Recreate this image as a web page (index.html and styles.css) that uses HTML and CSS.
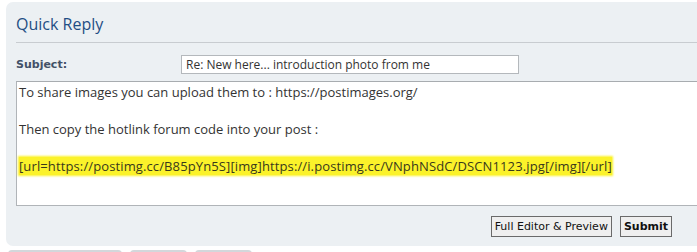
FILE: index.html
```html
<!DOCTYPE html>
<html lang="en">
<head>
    <meta charset="UTF-8">
    <meta name="viewport" content="width=device-width, initial-scale=1.0">
    <title>Quick Reply</title>
    <link rel="stylesheet" href="styles.css">
</head>
<body>
    <div class="panel">
        <h2 class="panel-title">Quick Reply</h2>
        <div class="subject-row">
            <label class="subject-label" for="subject">Subject:</label>
            <input class="subject-input" id="subject" type="text" value="Re: New here... introduction photo from me">
        </div>
        <div class="message-box">
            <div class="message-line">To share images you can upload them to : https://postimages.org/</div>
            <div class="message-line">&nbsp;</div>
            <div class="message-line">Then copy the hotlink forum code into your post :</div>
            <div class="message-line">&nbsp;</div>
            <div class="message-line"><span class="marker">[url=https://postimg.cc/B85pYn5S][img]https://i.postimg.cc/VNphNSdC/DSCN1123.jpg[/img][/url]</span></div>
        </div>
        <div class="button-row">
            <button class="form-button">Full Editor &amp; Preview</button>
            <button class="form-button primary">Submit</button>
        </div>
    </div>
    <div class="tab-row">
        <div class="tab tab-wide"></div>
        <div class="tab"></div>
        <div class="tab"></div>
    </div>
</body>
</html>
```

FILE: styles.css
```css
body {
    margin: 0;
    background-color: #ffffff;
    overflow: hidden;
    font-family: "Open Sans", sans-serif;
}
/* panel runs on past the right side of the window */
.panel {
    margin: 2px 0 0 6px;
    height: 244px;
    box-sizing: border-box;
    padding: 0 0 0 10px;
    background-color: #ecf0f3;
    border-radius: 7px 0 0 7px;
}
.panel-title {
    margin: 0;
    padding: 12px 0 8px 0;
    line-height: 20px;
    font-size: 16px;
    font-weight: normal;
    color: #1f4e84;
    border-bottom: 1px solid #c8ccd0;
}
.subject-row {
    display: flex;
    align-items: center;
    margin-top: 12px;
}
.subject-label {
    width: 165px;
    font-family: "DejaVu Sans", sans-serif;
    font-size: 11px;
    font-weight: bold;
    color: #425067;
}
.subject-input {
    width: 338px;
    height: 19px;
    box-sizing: border-box;
    margin: 0;
    padding: 0 4px;
    border: 1px solid #b4b8bc;
    background-color: #ffffff;
    font-family: "Open Sans", sans-serif;
    font-size: 12px;
    color: #333333;
}
.message-box {
    margin-top: 7px;
    height: 125px;
    box-sizing: border-box;
    padding: 1px 2px;
    background-color: #ffffff;
    border: 1px solid #b0b4b8;
    border-right: none;
    border-top-color: #a8acb0;
    font-size: 13px;
    line-height: 18.5px;
    color: #333333;
}
.message-line {
    white-space: nowrap;
}
.marker {
    background-color: #fbf22a;
    box-shadow: 0 0 2px 1px #fbf22a;
    color: #38381c;
    letter-spacing: 0.12px;
}
.button-row {
    display: flex;
    justify-content: flex-end;
    gap: 8px;
    width: 656px;
    margin-top: 10px;
}
.form-button {
    height: 21px;
    margin: 0;
    padding: 0 3px;
    border: 1px solid #6a6a6a;
    background-color: #efefef;
    font-family: "DejaVu Sans", sans-serif;
    font-size: 11px;
    color: #111111;
}
.form-button.primary {
    font-weight: bold;
}
.tab-row {
    display: flex;
    gap: 8px;
    margin: 4px 0 0 8px;
}
.tab {
    width: 57px;
    height: 10px;
    border-top: 2px solid #d3d7db;
    border-radius: 4px 4px 0 0;
    background-color: #eef1f4;
}
.tab-wide {
    width: 114px;
}
```
